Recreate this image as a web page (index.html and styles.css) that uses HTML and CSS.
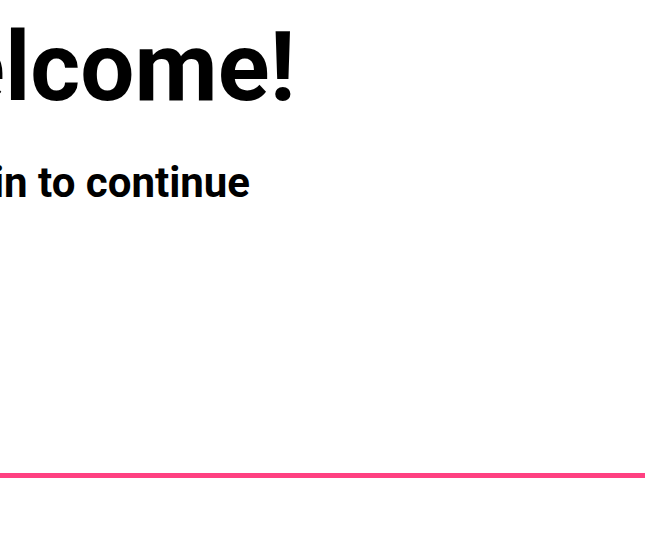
FILE: index.html
```html
<!DOCTYPE html>
<html>
<head>
<meta charset="utf-8">
<link rel="stylesheet" href="styles.css">
</head>
<body>
<div class="page">
  <header class="intro">
    <h1 class="title">Welcome!</h1>
    <p class="subtitle">Sign in to continue</p>
  </header>
  <div class="accent"></div>
</div>
</body>
</html>
```
FILE: styles.css
```css
html, body {
  margin: 0;
  padding: 0;
  background: #ffffff;
  overflow: hidden;
}
.page {
  width: 645px;
  height: 547px;
  display: flex;
  flex-direction: column;
}
.intro {
  width: 166px;
  display: flex;
  flex-direction: column;
  align-items: center;
}
.title {
  margin: 0;
  white-space: nowrap;
  font-family: Roboto, "Liberation Sans", sans-serif;
  font-weight: 700;
  font-size: 96px;
  line-height: 134px;
  color: #000;
}
.subtitle {
  margin: 25px 18px 0 0;
  white-space: nowrap;
  font-family: Roboto, "Liberation Sans", sans-serif;
  font-weight: 700;
  font-size: 42px;
  line-height: 48px;
  color: #000;
}
.accent {
  margin-top: auto;
  margin-bottom: 69px;
  height: 5px;
  background: #ff4081;
}
```
